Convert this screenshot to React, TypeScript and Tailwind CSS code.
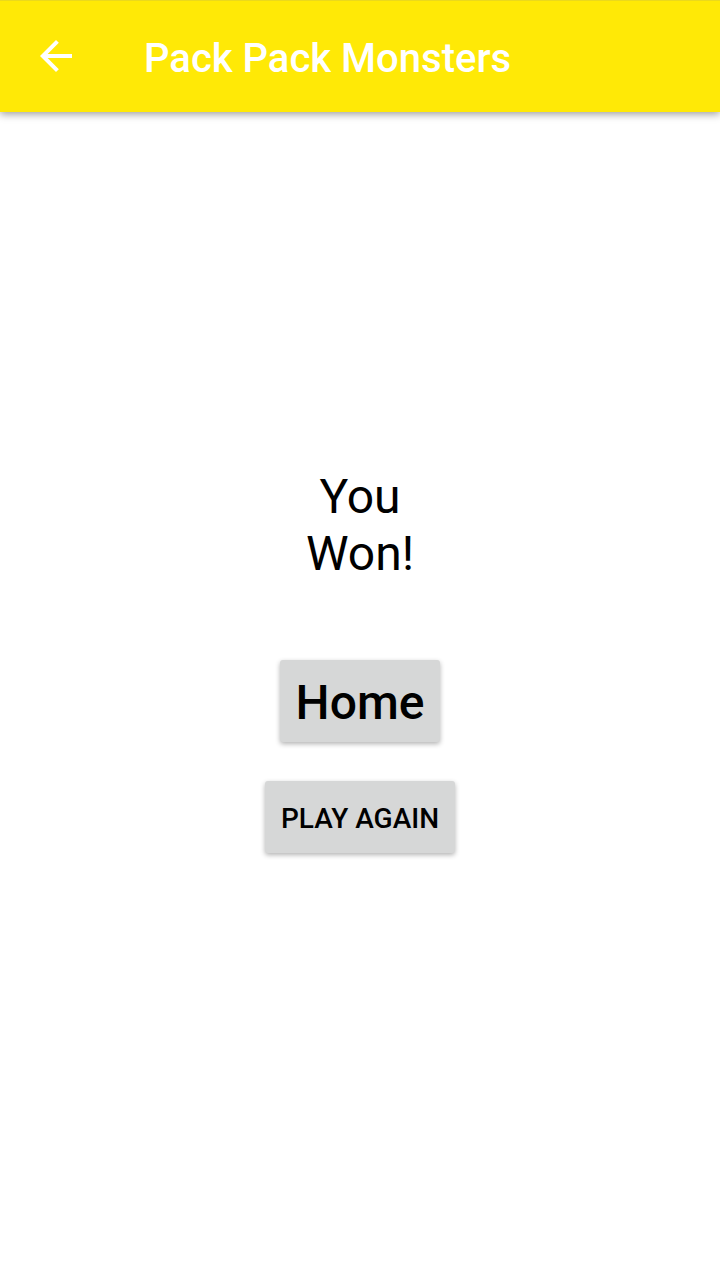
export default function App() {
  return (
    <div className="flex min-h-screen flex-col bg-white font-['Roboto',sans-serif] text-black">
      <header className="flex h-28 items-center border-t border-[#ebd91c] bg-[#ffe906] px-7 pb-px text-white shadow-[0_2px_8px_rgba(0,0,0,0.4)]">
        <button type="button" aria-label="Back" className="flex size-14 items-center justify-center">
          <svg viewBox="0 0 24 24" className="size-12" fill="currentColor" aria-hidden="true">
            <path d="M20 11H7.83l5.59-5.59L12 4l-8 8 8 8 1.41-1.41L7.83 13H20v-2z" />
          </svg>
        </button>
        <h1 className="ml-15 pt-1.5 text-[40px] leading-12 font-medium">Pack Pack Monsters</h1>
      </header>
      <main className="flex flex-1 flex-col items-center justify-center pb-[71px]">
        <p className="text-center text-5xl leading-[57px]">
          You
          <br />
          Won!
        </p>
        <button type="button" className="mt-[78px] rounded-[3px] bg-[#d6d7d7] px-4 pt-[15px] pb-[11px] text-5xl leading-14 font-medium shadow-[0_2px_5px_rgba(0,0,0,0.3)]">
          Home
        </button>
        <button type="button" className="mt-[39px] rounded-[3px] bg-[#d6d7d7] px-4 pt-[22px] pb-[18px] text-[28px] leading-8 font-medium shadow-[0_2px_5px_rgba(0,0,0,0.3)]">
          PLAY AGAIN
        </button>
      </main>
    </div>
  );
}
